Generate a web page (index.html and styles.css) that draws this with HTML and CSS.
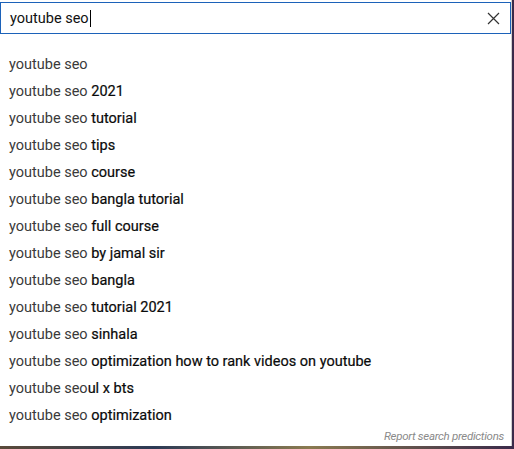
FILE: index.html
```html
<!DOCTYPE html>
<html lang="en">
<head>
    <meta charset="UTF-8">
    <meta name="viewport" content="width=device-width, initial-scale=1.0">
    <title>YouTube search suggestions</title>
    <link rel="stylesheet" href="styles.css">
</head>
<body>
    <div class="popup">
        <div class="searchbox">
            <span class="query">youtube seo</span><span class="caret"></span>
            <button class="clear" aria-label="Clear">
                <svg width="13" height="13" viewBox="0 0 13 13">
                    <path d="M1 1 L12 12 M12 1 L1 12" stroke="#333" stroke-width="1.2" fill="none"/>
                </svg>
            </button>
        </div>
        <ul class="suggestions">
            <li>youtube seo</li>
            <li>youtube seo <b>2021</b></li>
            <li>youtube seo <b>tutorial</b></li>
            <li>youtube seo <b>tips</b></li>
            <li>youtube seo <b>course</b></li>
            <li>youtube seo <b>bangla tutorial</b></li>
            <li>youtube seo <b>full course</b></li>
            <li>youtube seo <b>by jamal sir</b></li>
            <li>youtube seo <b>bangla</b></li>
            <li>youtube seo <b>tutorial 2021</b></li>
            <li>youtube seo <b>sinhala</b></li>
            <li>youtube seo <b>optimization how to rank videos on youtube</b></li>
            <li>youtube seo<b>ul x bts</b></li>
            <li>youtube seo <b>optimization</b></li>
        </ul>
        <div class="report">Report search predictions</div>
    </div>
</body>
</html>
```

FILE: styles.css
```css
/* Page */
html, body {
    margin: 0;
    padding: 0;
    height: 100%;
    overflow: hidden;
}

body {
    background: linear-gradient(90deg, #5a4a3a, #2c3a55 30%, #8a7a50 60%, #3a2a4a);
    font-family: 'Roboto', 'Liberation Sans', sans-serif;
}

/* Popup */
.popup {
    width: 512px;
    height: 446px;
    background-color: #fff;
    border-right: 1px solid #d0d0d0;
    box-sizing: border-box;
    display: flex;
    flex-direction: column;
}

.searchbox {
    margin-top: 2px;
    height: 34px;
    border: 1px solid #1c62b9;
    box-sizing: border-box;
    display: flex;
    align-items: center;
    padding-left: 9px;
    font-size: 14.5px;
    color: #111;
}

.caret {
    width: 1px;
    height: 17px;
    background-color: #000;
    margin-left: 1px;
}

.clear {
    margin-left: auto;
    margin-right: 10px;
    background: none;
    border: none;
    padding: 0;
    display: flex;
}

.suggestions {
    list-style: none;
    margin: 0;
    padding: 17px 0 0 0;
}

.suggestions li {
    height: 27px;
    line-height: 27px;
    padding-left: 9px;
    font-size: 14.5px;
    color: #3a3a3a;
}

.suggestions b {
    color: #0a0a0a;
    font-weight: normal;
    -webkit-text-stroke: 0.2px #0a0a0a;
}

.report {
    margin-top: auto;
    text-align: right;
    padding: 0 7px 3px 0;
    font-size: 11.5px;
    letter-spacing: -0.3px;
    font-style: italic;
    color: #8a8a8a;
}
```
